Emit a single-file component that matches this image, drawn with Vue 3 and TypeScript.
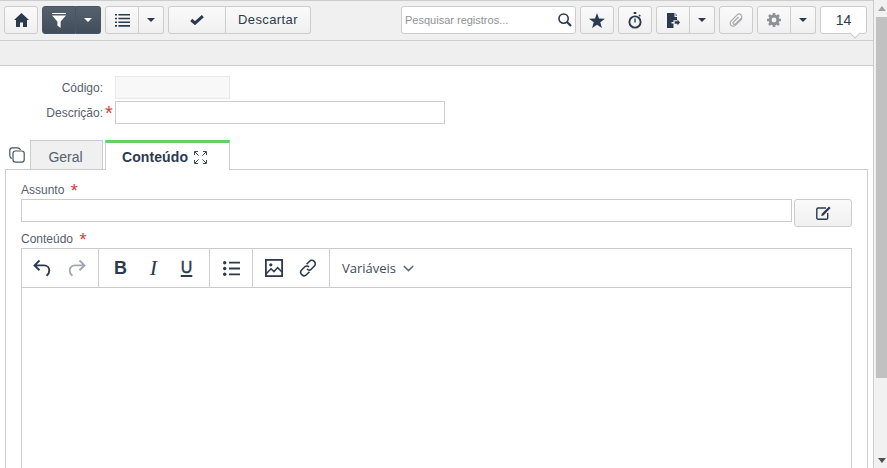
<script setup lang="ts">
const title = 'Conteúdo'
</script>

<template>
  <div class="page">
    <div class="main">
      <header class="toolbar">
        <button class="btn square"><svg width="15" height="14" viewBox="0 0 15 14"><path d="M7.5 0 L15 7 L13 7 L13 14 L9 14 L9 9.5 L6 9.5 L6 14 L2 14 L2 7 L0 7 Z" fill="#2b3a4f"/></svg></button>
        <div class="group dark">
          <button class="btn seg"><svg width="14" height="15" viewBox="0 0 14 15"><path d="M0 0H14V1H0Z M0 2.5H14L8.6 8.5V15L5.4 12.5V8.5Z" fill="#fff"/></svg></button>
          <button class="btn caret-btn"><span class="caret white"></span></button>
        </div>
        <div class="group">
          <button class="btn seg"><svg width="15" height="13" viewBox="0 0 15 13" fill="#2b3a4f"><path d="M0 0h2v1.6H0z M3.4 0H15v1.6H3.4z M0 3.7h2v1.6H0z M3.4 3.7H15v1.6H3.4z M0 7.4h2V9H0z M3.4 7.4H15V9H3.4z M0 11.1h2v1.6H0z M3.4 11.1H15v1.6H3.4z"/></svg></button>
          <button class="btn caret-btn"><span class="caret"></span></button>
        </div>
        <div class="group">
          <button class="btn check"><svg width="14" height="10" viewBox="0 0 14 10"><path d="M1.2 5 L5 8.2 L12.8 1.2" fill="none" stroke="#2b3a4f" stroke-width="3"/></svg></button>
          <button class="btn discard">Descartar</button>
        </div>
        <div class="search">
          <span class="placeholder">Pesquisar registros...</span>
          <svg width="14" height="14" viewBox="0 0 14 14"><circle cx="5.6" cy="5.6" r="4.6" fill="none" stroke="#2b3a4f" stroke-width="1.6"/><path d="M9 9 L13 13" stroke="#2b3a4f" stroke-width="2.2"/></svg>
        </div>
        <button class="btn square"><svg width="16" height="15" viewBox="0 0 16 15"><path d="M8 0 L10 5.4 L16 5.7 L11.3 9.3 L12.9 15 L8 11.8 L3.1 15 L4.7 9.3 L0 5.7 L6 5.4 Z" fill="#2b3a4f"/></svg></button>
        <button class="btn square"><svg width="14" height="17" viewBox="0 0 14 17"><path d="M5.7 0h2.6v2H5.7z M11.4 2.4l1.5 1.4-1 1-1.5-1.4z" fill="#2b3a4f"/><circle cx="7" cy="10" r="5.6" fill="none" stroke="#2b3a4f" stroke-width="1.9"/><path d="M7 6.5V10.5" stroke="#2b3a4f" stroke-width="1.4"/></svg></button>
        <div class="group">
          <button class="btn seg"><svg width="13" height="15" viewBox="0 0 13 15"><path d="M0 0H7.5V4H10V7.3H6.5V9H4.5V10.5H6.5V15H0Z M8.6 0 L10 2.8H8.6Z M7.7 8.2H10.5V6.6L13 9.5L10.5 12.4V10.8H7.7Z" fill="#2b3a4f"/></svg></button>
          <button class="btn caret-btn"><span class="caret"></span></button>
        </div>
        <button class="btn square"><svg width="15" height="15" viewBox="0 0 15 15"><path d="M13.2 5.6 L6.6 12.2 C5.2 13.6 3.2 13.6 2 12.4 C0.8 11.2 0.9 9.2 2.2 7.9 L8.2 1.9 C9.2 0.9 10.9 0.7 12 1.8 C13.1 2.9 13 4.5 12 5.5 L6.5 11 C5.9 11.6 5 11.6 4.4 11 C3.9 10.4 3.9 9.6 4.5 9 L9.5 4" fill="none" stroke="#a9abae" stroke-width="1.2"/></svg></button>
        <div class="group">
          <button class="btn seg"><svg width="14" height="14" viewBox="0 0 14 14"><circle cx="7" cy="7" r="3.9" fill="none" stroke="#8d9095" stroke-width="3"/><path d="M7 0v2.5M7 11.5V14M0 7h2.5M11.5 7H14M2 2l1.8 1.8M10.2 10.2L12 12M12 2l-1.8 1.8M3.8 10.2L2 12" stroke="#8d9095" stroke-width="2.6"/></svg></button>
          <button class="btn caret-btn"><span class="caret"></span></button>
        </div>
        <div class="count">14</div>
      </header>
      <div class="band"></div>
      <section class="content">
        <div class="form-row first">
          <label class="form-label">Código:</label>
          <span class="req"></span>
          <div class="input code"></div>
        </div>
        <div class="form-row">
          <label class="form-label">Descrição:</label>
          <span class="req">*</span>
          <div class="input desc"></div>
        </div>
        <div class="tabs">
          <svg class="copy" width="16" height="16" viewBox="0 0 16 16" fill="none" stroke="#4a5563" stroke-width="1.2"><path d="M2.8 11.6 C1.4 10.8 0.8 9.9 0.8 8.5 V3.4 C0.8 1.8 1.8 0.8 3.4 0.8 H8.5 C9.9 0.8 10.8 1.4 11.6 2.8"/><rect x="4" y="4" width="11.2" height="11.2" rx="2.4"/></svg>
          <div class="tab">Geral</div>
          <div class="tab active">
            {{ title }}
            <svg width="13" height="13" viewBox="0 0 13 13" fill="none" stroke="#3b4656" stroke-width="1"><path d="M.5 4V.5H4M9 .5h3.5V4M12.5 9v3.5H9M4 12.5H.5V9M1 1l3.6 3.6M12 1L8.4 4.6M12 12L8.4 8.4M1 12l3.6-3.6"/></svg>
          </div>
        </div>
        <div class="panel">
          <div class="field-label">Assunto <span class="star">*</span></div>
          <div class="subject">
            <div class="input subject-input"></div>
            <button class="btn edit"><svg width="15" height="14" viewBox="0 0 15 14"><path d="M10 2H2A1.2 1.2 0 0 0 .8 3.2V12A1.2 1.2 0 0 0 2 13.2H10.5A1.2 1.2 0 0 0 11.7 12V7" fill="none" stroke="#2b3a4f" stroke-width="1.4"/><path d="M13 .4 L14.6 2 L7.4 9.4 L5.2 10 L5.8 7.7 Z" fill="#2b3a4f"/></svg></button>
          </div>
          <div class="field-label second">Conteúdo <span class="star">*</span></div>
          <div class="editor">
            <div class="ed-toolbar">
              <div class="ed-group g1">
                <svg width="18" height="18" viewBox="0 0 18 18" fill="none" stroke="#2b3a4f" stroke-width="1.9"><path d="M6.5 1.5 L1.5 6.4 L6.5 11.3 M1.8 6.4 H11 C14.2 6.4 16.3 8.6 16.3 11.4 C16.3 13.8 15 15.6 13.6 16.8"/></svg>
                <svg width="18" height="18" viewBox="0 0 18 18" fill="none" stroke="#a2a8b0" stroke-width="1.9"><path d="M11.5 1.5 L16.5 6.4 L11.5 11.3 M16.2 6.4 H7 C3.8 6.4 1.7 8.6 1.7 11.4 C1.7 13.8 3 15.6 4.4 16.8"/></svg>
              </div>
              <div class="ed-group g2">
                <span class="ed-b">B</span>
                <span class="ed-i">I</span>
                <span class="ed-u">U</span>
              </div>
              <div class="ed-group g3">
                <svg width="17" height="15" viewBox="0 0 17 15" fill="#2b3a4f"><circle cx="1.7" cy="1.7" r="1.7"/><circle cx="1.7" cy="7.5" r="1.7"/><circle cx="1.7" cy="13.3" r="1.7"/><path d="M6 .8H17V2.6H6z M6 6.6H17V8.4H6z M6 12.4H17V14.2H6z"/></svg>
              </div>
              <div class="ed-group g4">
                <svg width="18" height="18" viewBox="0 0 18 18" fill="none" stroke="#2b3a4f" stroke-width="1.8"><rect x=".9" y=".9" width="16.2" height="16.2"/><circle cx="5.8" cy="5.8" r="1.6" fill="#2b3a4f" stroke="none"/><path d="M1 15 L6 9.8 L9 12.6 L12.6 8.6 L17 13" stroke-width="1.5"/></svg>
                <svg width="18" height="18" viewBox="0 0 18 18" fill="none" stroke="#2b3a4f" stroke-width="1.6"><path d="M7.6 5.2 L10.6 2.2 C11.8 1 13.8 1 15.2 2.4 C16.6 3.8 16.6 5.8 15.4 7 L12.2 10.2 C11 11.4 9.2 11.2 8 10"/><path d="M10.4 12.8 L7.4 15.8 C6.2 17 4.2 17 2.8 15.6 C1.4 14.2 1.4 12.2 2.6 11 L5.8 7.8 C7 6.6 8.8 6.8 10 8"/></svg>
              </div>
              <div class="ed-group g5">
                <span class="vars">Variáveis</span>
                <svg width="11" height="7" viewBox="0 0 11 7" fill="none" stroke="#5a6472" stroke-width="1.5"><path d="M.8 1 L5.5 5.6 L10.2 1"/></svg>
              </div>
            </div>
          </div>
        </div>
      </section>
    </div>
    <aside class="scrollbar">
      <span class="arrow up"></span>
      <span class="thumb"></span>
      <span class="arrow down"></span>
    </aside>
  </div>
</template>

<style>
html, body { margin: 0; overflow: hidden; background: #fff; }
</style>

<style scoped>
.page {
  display: flex;
  width: 887px;
  height: 468px;
  overflow: hidden;
  font-family: "Liberation Sans", Arial, sans-serif;
  color: #2b3a4f;
  background: #fff;
}
.main {
  width: 874px;
  box-sizing: border-box;
  height: 468px;
  flex: none;
  overflow: hidden;
  border-right: 1px solid #ccc;
}
.toolbar {
  display: flex;
  align-items: flex-start;
  gap: 4px;
  box-sizing: border-box;
  height: 41px;
  padding: 5px 0 0 4px;
  background: #f0f0f0;
  border-top: 1px solid #ccc;
  border-bottom: 1px solid #ccc;
}
.btn {
  display: flex;
  align-items: center;
  justify-content: center;
  box-sizing: border-box;
  height: 28px;
  padding: 0;
  margin: 0;
  border: 1px solid #ccc;
  border-radius: 3px;
  background: linear-gradient(#fafafa, #f0f0f0);
  font: inherit;
  color: inherit;
}
.square { width: 34px; flex: none; }
.group { display: flex; flex: none; }
.group .btn { border-radius: 0; }
.group .btn:first-child { border-radius: 3px 0 0 3px; }
.group .btn:last-child { border-radius: 0 3px 3px 0; border-left: 0; }
.seg { width: 34px; }
.caret-btn { width: 25px; }
.dark .btn {
  background: linear-gradient(#56616f, #424d5c);
  border-color: #4a5564;
}
.dark .caret-btn { border-left: 1px solid #5f6a78; }
.caret {
  width: 0;
  height: 0;
  border-left: 4px solid transparent;
  border-right: 4px solid transparent;
  border-top: 4px solid #2b3a4f;
}
.caret.white { border-top-color: #fff; }
.check { width: 58px; }
.discard { width: 85px; font-size: 13px; letter-spacing: 0.4px; padding-bottom: 2px; }
.search {
  display: flex;
  align-items: center;
  justify-content: space-between;
  box-sizing: border-box;
  width: 175px;
  height: 28px;
  flex: none;
  margin-left: 86px;
  padding: 0 3px;
  background: #fff;
  border: 1px solid #ccc;
  border-radius: 3px;
}
.placeholder { font-size: 11px; color: #8e9296; }
.count {
  position: relative;
  display: flex;
  align-items: center;
  justify-content: center;
  box-sizing: border-box;
  width: 47px;
  height: 28px;
  flex: none;
  background: #fff;
  border: 1px solid #ccc;
  border-radius: 3px;
  font-size: 14px;
}
.count::after {
  content: "";
  position: absolute;
  right: 7px;
  bottom: -4px;
  width: 7px;
  height: 7px;
  background: #fff;
  border-right: 1px solid #ccc;
  border-bottom: 1px solid #ccc;
  transform: rotate(45deg);
}
.band {
  box-sizing: border-box;
  height: 25px;
  background: #efefef;
  border-bottom: 1px solid #ccc;
}
.content { padding-top: 10px; }
.form-row {
  display: flex;
  align-items: center;
  height: 23px;
  margin-bottom: 2px;
}
.form-label {
  box-sizing: border-box;
  width: 103px;
  text-align: right;
  font-size: 12px;
  color: #56606e;
}
.req {
  width: 12px;
  box-sizing: border-box;
  padding-left: 2px;
  font-size: 20px;
  line-height: 18px;
  height: 18px;
  color: #e0383e;
}
.input {
  box-sizing: border-box;
  height: 23px;
  background: #fff;
  border: 1px solid #ccc;
}
.code { width: 115px; background: #f8f8f8; border-color: #e8e8e8; }
.desc { width: 330px; }
.tabs {
  display: flex;
  align-items: flex-end;
  height: 30px;
  margin-top: 15px;
  padding-left: 9px;
  box-sizing: border-box;
}
.copy { align-self: flex-start; margin: 8px 5px 0 0; flex: none; }
.tab {
  display: flex;
  align-items: center;
  justify-content: center;
  gap: 6px;
  box-sizing: border-box;
  width: 73px;
  height: 29px;
  padding: 3px 2px 0 0;
  background: #f0f0f0;
  border: 1px solid #ccc;
  border-bottom: 0;
  font-size: 14px;
  color: #56606e;
}
.tab.active {
  width: 125px;
  height: 30px;
  margin-left: 2px;
  margin-bottom: -1px;
  position: relative;
  padding: 1px 6px 0 0;
  background: #fff;
  border-top: 3px solid #66cf66;
  font-weight: bold;
  letter-spacing: 0.1px;
  color: #2b3a4f;
}
.panel {
  box-sizing: border-box;
  width: 863px;
  margin-left: 5px;
  height: 320px;
  padding: 11px 15px 0;
  border: 1px solid #ccc;
}
.field-label {
  height: 18px;
  font-size: 12px;
  line-height: 19px;
  color: #56606e;
}
.field-label.second { margin-top: 4px; height: 17px; line-height: 17px; }
.star { color: #e0383e; font-size: 18px; line-height: 12px; margin-left: 3px; vertical-align: -3px; }
.subject { display: flex; align-items: flex-start; gap: 2px; }
.subject-input { width: 771px; }
.edit { width: 58px; height: 28px; }
.editor {
  box-sizing: border-box;
  width: 831px;
  height: 260px;
  border: 1px solid #ccc;
}
.ed-toolbar {
  display: flex;
  box-sizing: border-box;
  height: 39px;
  border-bottom: 1px solid #ccc;
}
.ed-group {
  display: flex;
  align-items: center;
  box-sizing: border-box;
  height: 38px;
  border-right: 1px solid #ccc;
  flex: none;
}
.g1 { width: 77px; padding-left: 11px; gap: 17px; }
.g2 { width: 111px; position: relative; }
.g3 { width: 43px; padding-left: 13px; }
.g4 { width: 77px; padding-left: 12px; gap: 16px; }
.g5 { border-right: 0; padding-left: 12px; gap: 7px; }
.ed-b, .ed-i, .ed-u { width: 33px; text-align: center; line-height: 1; }
.ed-b { margin-left: 5px; font-size: 18px; font-weight: bold; }
.ed-i { font-family: "Liberation Serif", serif; font-style: italic; font-size: 22px; }
.ed-u { font-size: 16px; text-decoration: underline; text-decoration-thickness: 2px; text-underline-offset: 2px; -webkit-text-stroke: 0.4px #2b3a4f; }
.vars { font-family: "Open Sans", sans-serif; font-size: 13px; color: #3f4a5a; }
.scrollbar {
  display: flex;
  flex-direction: column;
  align-items: center;
  box-sizing: border-box;
  width: 13px;
  flex: none;
  height: 468px;
  padding: 6px 0 5px 2px;
  background: #f1f1f1;
}
.arrow {
  width: 0;
  height: 0;
  border-left: 4px solid transparent;
  border-right: 4px solid transparent;
}
.arrow.up { border-bottom: 5px solid #a3a3a3; }
.arrow.down { margin-top: auto; border-top: 5px solid #505050; }
.thumb {
  width: 11px;
  height: 361px;
  margin-top: 6px;
  background: #c1c1c1;
}
</style>
